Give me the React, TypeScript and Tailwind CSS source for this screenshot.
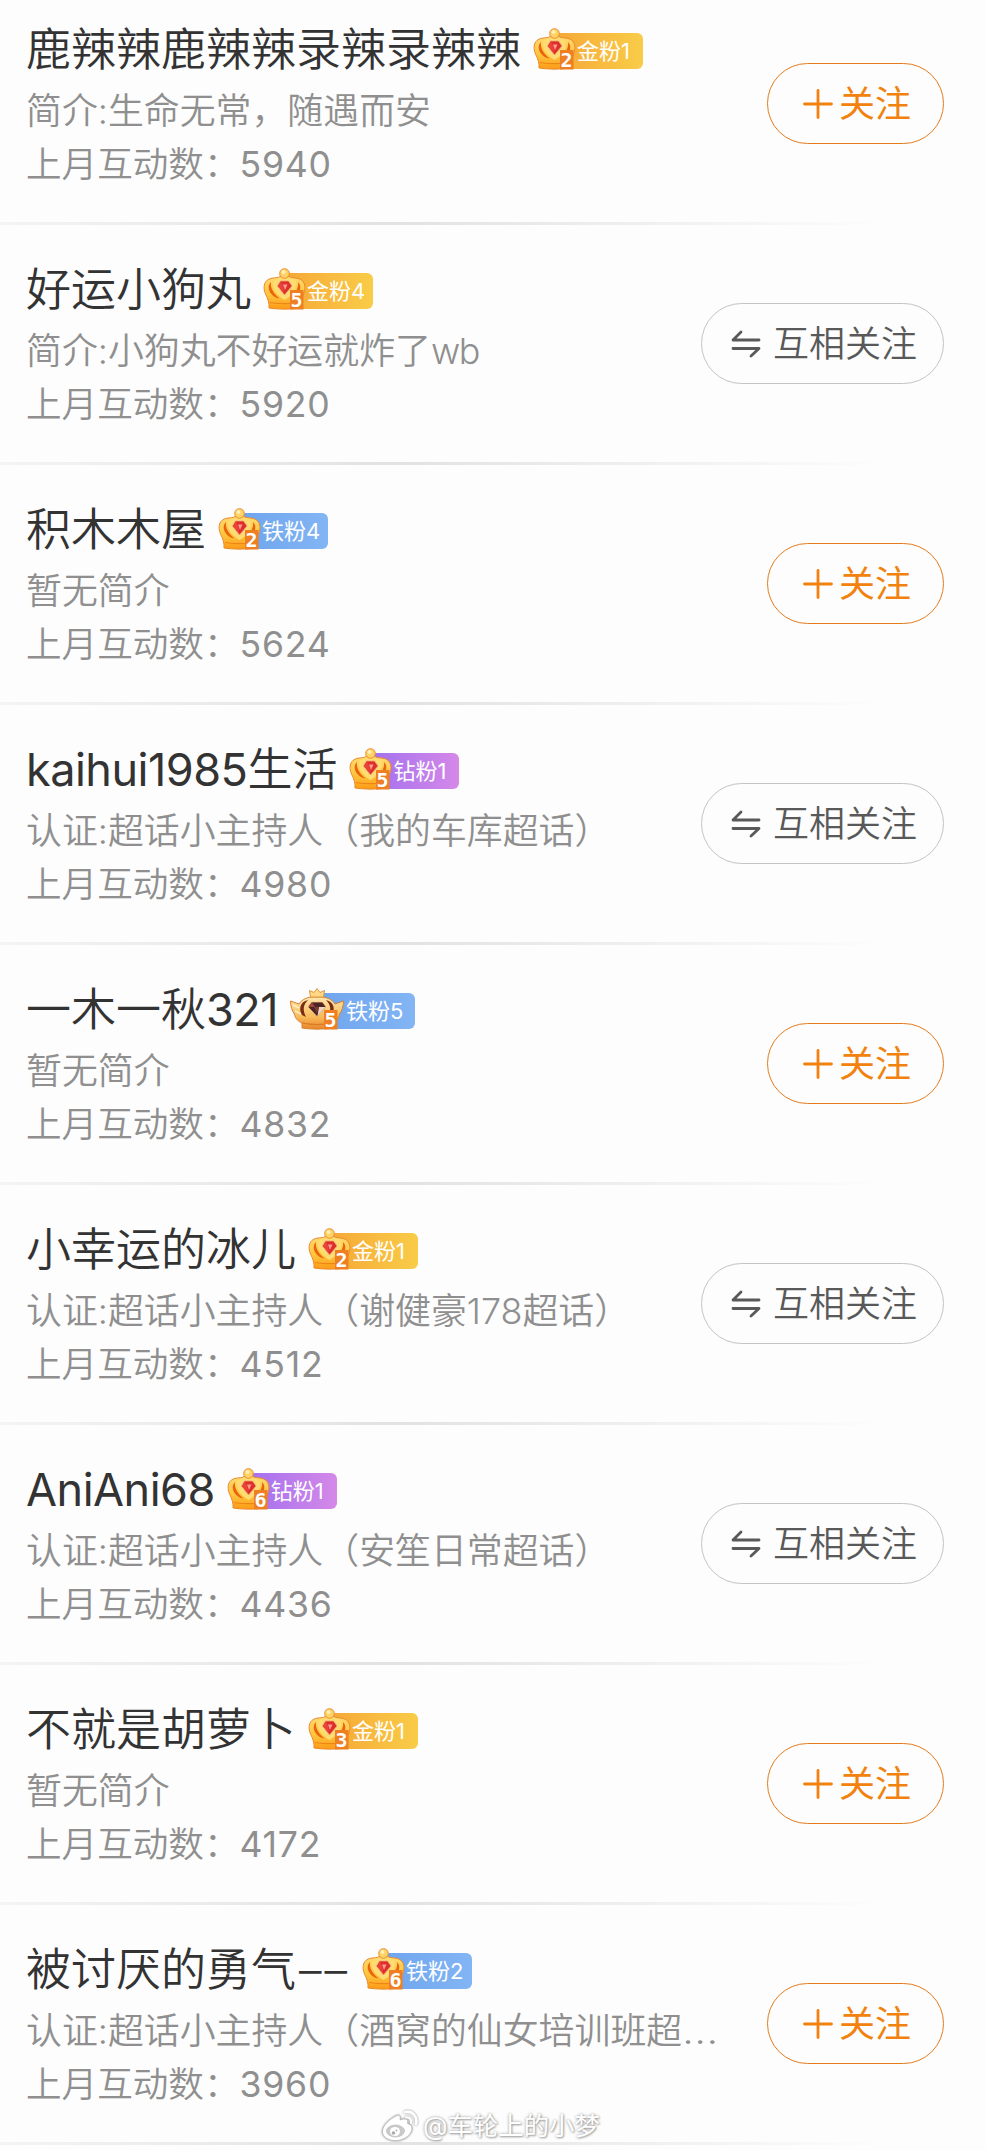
import clsx from 'clsx'

type Level = 'gold' | 'iron' | 'diamond'

type Fan = {
  name: string
  intro: string
  count: number
  level: Level
  levelText: string
  crown: string
  royal?: boolean
  mutual: boolean
}

const fans: Fan[] = [
  { name: '鹿辣辣鹿辣辣录辣录辣辣', intro: '简介:生命无常，随遇而安', count: 5940, level: 'gold', levelText: '金粉1', crown: '2', mutual: false },
  { name: '好运小狗丸', intro: '简介:小狗丸不好运就炸了wb', count: 5920, level: 'gold', levelText: '金粉4', crown: '5', mutual: true },
  { name: '积木木屋', intro: '暂无简介', count: 5624, level: 'iron', levelText: '铁粉4', crown: '2', mutual: false },
  { name: 'kaihui1985生活', intro: '认证:超话小主持人（我的车库超话）', count: 4980, level: 'diamond', levelText: '钻粉1', crown: '5', mutual: true },
  { name: '一木一秋321', intro: '暂无简介', count: 4832, level: 'iron', levelText: '铁粉5', crown: '5', royal: true, mutual: false },
  { name: '小幸运的冰儿', intro: '认证:超话小主持人（谢健豪178超话）', count: 4512, level: 'gold', levelText: '金粉1', crown: '2', mutual: true },
  { name: 'AniAni68', intro: '认证:超话小主持人（安笙日常超话）', count: 4436, level: 'diamond', levelText: '钻粉1', crown: '6', mutual: true },
  { name: '不就是胡萝卜', intro: '暂无简介', count: 4172, level: 'gold', levelText: '金粉1', crown: '3', mutual: false },
  { name: '被讨厌的勇气––', intro: '认证:超话小主持人（酒窝的仙女培训班超…', count: 3960, level: 'iron', levelText: '铁粉2', crown: '6', mutual: false },
]

const levelColors: Record<Level, string> = {
  gold: 'from-[#f5a836] to-[#f9cc48]',
  iron: 'from-[#6fa5ee] to-[#83b5f4]',
  diamond: 'from-[#a370ee] to-[#d588e8]',
}

function CrownDigit({ value, x }: { value: string; x: number }) {
  return (
    <>
      <rect x={x} y="22" width="13.5" height="19.500" fill="#ee7f22" />
      <text
        x={x + 6.5}
        y="39"
        textAnchor="middle"
        fontSize="20"
        fontWeight="700"
        fontFamily="'DejaVu Sans Mono', monospace"
        fill="#fff"
      >
        {value}
      </text>
    </>
  )
}

function Crown({ value }: { value: string }) {
  return (
    <svg width="43" height="42" viewBox="0 0 43 42" className="shrink-0 overflow-visible">
      <defs>
        <linearGradient id="crownGold" x1="0" y1="0" x2="0" y2="1">
          <stop offset="0" stopColor="#ffd970" />
          <stop offset="0.55" stopColor="#ffc63e" />
          <stop offset="1" stopColor="#fd9a15" />
        </linearGradient>
      </defs>
      <path
        d="M6 40C6.400 35 5 31 2.500 26C-.5 19 1 11.500 9 10.200C13 9.500 15 10 17 8.500H26C28 10 30 9.500 34 10.200C42 11.500 43.500 19 40.500 26C38 31 37 35 37 40C28 41.500 15 41.500 6 40Z"
        fill="url(#crownGold)"
        stroke="#ec8a2c"
        strokeWidth="1"
      />
      <path d="M8 14C3.500 18 6 25 11 28.500C13 29.800 15 30.500 16.500 30.500C11 26 7 20 8 14Z" fill="#e9640f" />
      <path d="M35 14C39.500 18 37 25 32 28.500C30 29.800 28 30.500 26.500 30.500C32 26 36 20 35 14Z" fill="#e9640f" />
      <path d="M10.500 13C13 8.500 30 8.500 32.500 13C35 20 29 28 21.500 32C14 28 8 20 10.500 13Z" fill="#ffdc72" />
      <path d="M7 34.500C16 36 27 36 36 34.500" fill="none" stroke="#ee8518" strokeWidth="1.200" />
      <circle cx="21.500" cy="5.500" r="4.800" fill="#ffd264" stroke="#e98d34" strokeWidth="1" />
      <circle cx="20.500" cy="4" r="2" fill="#fff0b4" />
      <path d="M17.500 13H25.500L29 18L21.500 27L14.500 18Z" fill="#dd2f2b" stroke="#f4a078" strokeWidth="0.800" />
      <path d="M15 18L18 13.500L20 18L21.500 26Z" fill="#e94238" />
      <path d="M20 16.500H24.500L22 22Z" fill="#ff9b8a" />
      <CrownDigit value={value} x={27} />
    </svg>
  )
}

function RoyalCrown({ value }: { value: string }) {
  return (
    <svg width="54" height="42" viewBox="0 0 54 42" className="shrink-0 overflow-visible">
      <defs>
        <linearGradient id="crownRoyal" x1="0" y1="0" x2="0" y2="1">
          <stop offset="0" stopColor="#ffe7b0" />
          <stop offset="0.6" stopColor="#f9bd5c" />
          <stop offset="1" stopColor="#e9852a" />
        </linearGradient>
      </defs>
      <path
        d="M12 40L12 35C8 33.500 5 30 4.500 26C2 23 .5 18 .5 13L9 16C12 11 18 9 23 9H31C36 9 42 11 45 16L53.500 13C53.500 18 52 23 49.500 26C49 30 46 33.500 42 35V40C33 41.500 21 41.500 12 40Z"
        fill="url(#crownRoyal)"
        stroke="#d68231"
        strokeWidth="1"
      />
      <path d="M20.500 9L19.500 2.500L24 4.500L27 .5L30 4.500L34.500 2.500L33.500 9Z" fill="#ffd988" stroke="#e19639" strokeWidth="1" />
      <path d="M18 12C10 14 8.500 21 12 27L16 29C12.500 22 13 17 18 12Z" fill="#7a2d13" />
      <path d="M36 12C44 14 45.500 21 42 27L38 29C41.500 22 41 17 36 12Z" fill="#7a2d13" />
      <path d="M3 17L9 20M5 23L11 26" stroke="#fff0c4" strokeWidth="1.500" />
      <path d="M12 35C22 37 32 37 42 35" fill="none" stroke="#d97824" strokeWidth="1.200" />
      <path d="M21.500 14H32.500L36 19L27 28.500L18 19Z" fill="#4d2426" stroke="#f3c27e" strokeWidth="0.800" />
      <path d="M18.500 19L22 14.500L25 19Z" fill="#a0463a" />
      <path d="M29 19H35.500L27.500 28Z" fill="#f1d4bd" />
      <path d="M24 19H29L27 25Z" fill="#7c3b36" />
      <CrownDigit value={value} x={34} />
    </svg>
  )
}

function LevelBadge({ fan }: { fan: Fan }) {
  return (
    <div className="relative flex h-[42px] items-end">
      {/* the label runs under the crown, so it starts halfway into it */}
      <div
        className={clsx(
          'mb-[1px] flex h-9 items-center rounded-r-[6px] bg-linear-to-r text-[22px] leading-9 font-normal text-white',
          levelColors[fan.level],
          fan.royal ? 'ml-7 w-[97px] pl-7' : 'ml-[22px] w-[88px] pl-[22px]',
        )}
      >
        <span className="whitespace-nowrap">{fan.levelText}</span>
      </div>
      <div className="absolute top-0 left-0">
        {fan.royal ? <RoyalCrown value={fan.crown} /> : <Crown value={fan.crown} />}
      </div>
    </div>
  )
}

function FollowButton({ mutual }: { mutual: boolean }) {
  if (mutual) {
    return (
      <button
        type="button"
        className="flex h-[81px] w-[243px] items-center rounded-full border border-[#c4c4c4] pl-[29px] text-[36px] text-[#595959]"
      >
        <svg width="30" height="28" viewBox="0 0 30 28" fill="none" stroke="currentColor" strokeWidth="2.800" strokeLinecap="round" strokeLinejoin="round">
          <path d="M28 10H2L10 2" />
          <path d="M2 18.500H28L20 26" />
        </svg>
        <span className="ml-3 whitespace-nowrap">互相关注</span>
      </button>
    )
  }

  return (
    <button
      type="button"
      className="flex h-[81px] w-[177px] items-center rounded-full border-[1.500px] border-[#e37c1c] pl-[35px] text-[36px] font-normal text-[#f2820f]"
    >
      <svg width="30" height="30" viewBox="0 0 30 30" fill="none" stroke="currentColor" strokeWidth="2.800" strokeLinecap="round">
        <path d="M15 1.500V28.500M1.500 15H28.500" />
      </svg>
      <span className="ml-[6px] whitespace-nowrap">关注</span>
    </button>
  )
}

function FanName({ name }: { name: string }) {
  return (
    <h2 className="text-[45px] leading-[60px] whitespace-nowrap text-[#333]">
      {name.split(/(\w+|–+)/).map((part, i) => (
        <span
          key={i}
          className={clsx(
            /^\w/.test(part) && 'font-[380] tracking-[-0.500px]',
            part.startsWith('–') && 'ml-[3px] tracking-[3px]',
          )}
        >
          {part}
        </span>
      ))}
    </h2>
  )
}

function FanRow({ fan }: { fan: Fan }) {
  return (
    <li>
      <div className="flex h-[222px] justify-between pr-[41px] pl-[26px]">
        <div className="pt-5">
          <div className="flex h-[58px] items-center gap-3">
            <div className="pt-[2px]">
              <FanName name={fan.name} />
            </div>
            <LevelBadge fan={fan} />
          </div>
          <p className="mt-[6px] text-[35.900px] leading-[54px] whitespace-nowrap text-[#8f8f8f]">
            {fan.intro.split(/([a-z]+|…)/).map((part, i) => (
              <span
                key={i}
                className={clsx(
                  /^[a-z]/.test(part) && 'tracking-[-1.500px]',
                  part === '…' && 'inline-block origin-left scale-x-120',
                )}
              >
                {part}
              </span>
            ))}
          </p>
          <p className="text-[35.600px] leading-[54px] whitespace-nowrap text-[#8f8f8f]">
            上月互动数：<span className="font-[380] tracking-[0.800px]">{fan.count}</span>
          </p>
        </div>
        <div className="pt-[63px]">
          <FollowButton mutual={fan.mutual} />
        </div>
      </div>
      <div className="mb-[15px] h-[3px] bg-linear-to-r from-[#f4f4f4] via-[#e2e2e2] via-40% to-[#fdfdfd] to-90%" />
    </li>
  )
}

function Watermark() {
  return (
    <div className="absolute top-[2108px] left-[381px] flex items-center gap-[4px] text-[25.400px] leading-9 font-normal text-white [text-shadow:0_0_3px_#999,1px_1px_2px_#aaa]">
      <svg width="38" height="34" viewBox="0 0 38 34" fill="none" className="drop-shadow-[0_0_1px_#888]">
        <path
          d="M15 7C18 5 20 7 19 11C24 9 28 10 26.500 14.500C31 16 32 19 30 23C27 29 20 32 13 31.500C6 31 1 27 1.500 22C2 16 9 10 15 7Z"
          fill="#fff"
          stroke="#bbb"
          strokeWidth="0.800"
        />
        <ellipse cx="14.500" cy="22" rx="9.500" ry="6.500" fill="#c9c9c9" />
        <ellipse cx="14" cy="22.500" rx="5" ry="4.500" fill="#fff" />
        <circle cx="12.500" cy="24" r="1.800" fill="#aaa" />
        <circle cx="15.500" cy="21.500" r="0.900" fill="#aaa" />
        <path d="M25 8.500C28.500 8 31 10.500 30 14" stroke="#fff" strokeWidth="2.200" strokeLinecap="round" />
        <path d="M24 3C31 1.500 37 7.500 35 15" stroke="#fff" strokeWidth="2.800" strokeLinecap="round" />
      </svg>
      <span className="whitespace-nowrap">@车轮上的小梦</span>
    </div>
  )
}

export default function App() {
  return (
    <main className="relative h-[2150px] w-[985px] overflow-hidden bg-[#fdfdfd] font-['Inter','Noto_Sans_CJK_SC',sans-serif] font-[350]">
      <ul>
        {fans.map((fan) => (
          <FanRow key={fan.name} fan={fan} />
        ))}
      </ul>
      <Watermark />
    </main>
  )
}
